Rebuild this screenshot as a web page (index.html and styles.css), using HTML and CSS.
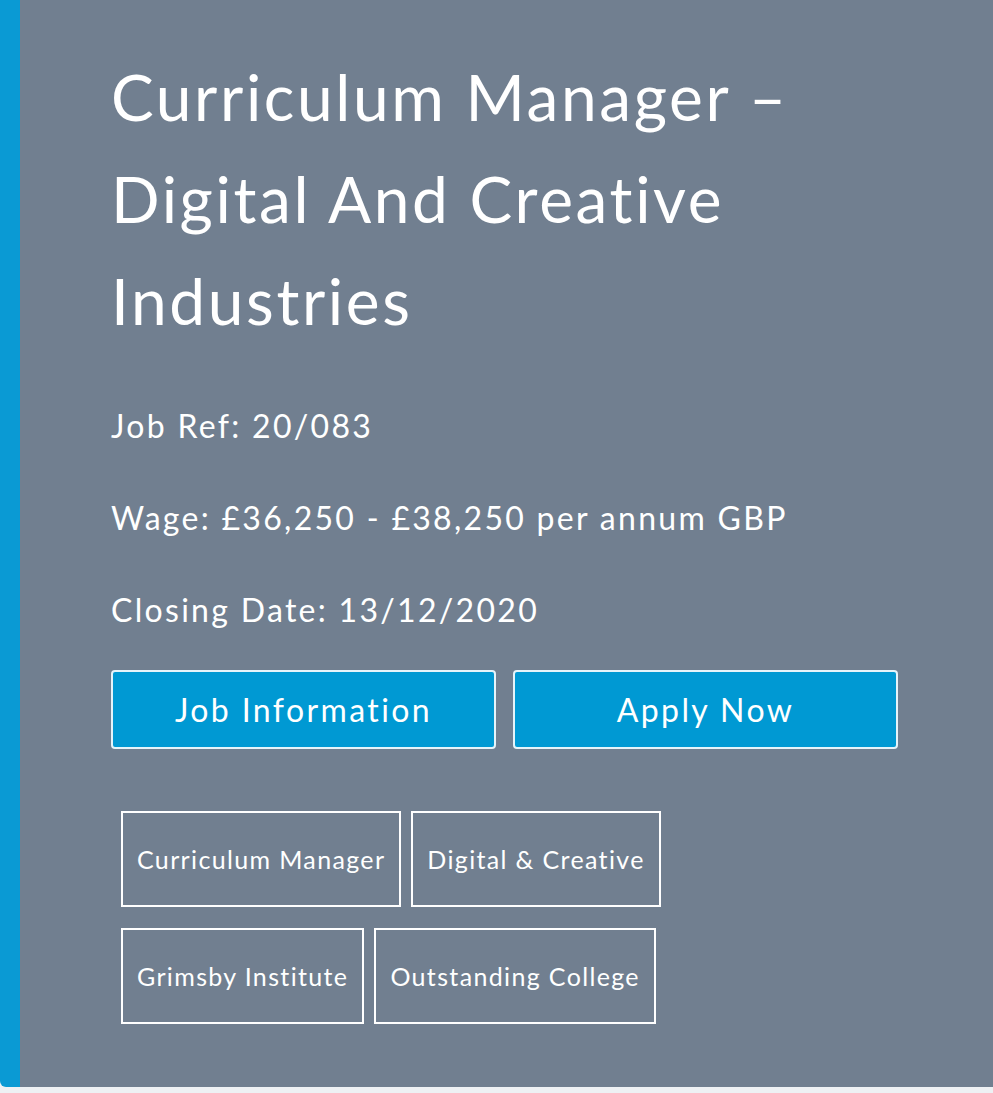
FILE: index.html
```html
<!DOCTYPE html>
<html>
<head>
    <meta charset="UTF-8">
    <title>Curriculum Manager – Digital And Creative Industries</title>
    <link rel="stylesheet" href="styles.css">
</head>
<body>
    <div class="job-card">
        <h2 class="job-title">Curriculum Manager – Digital And Creative Industries</h2>
        <p class="job-meta">Job Ref: 20/083</p>
        <p class="job-meta">Wage: £36,250 - £38,250 per annum GBP</p>
        <p class="job-meta">Closing Date: 13/12/2020</p>
        <div class="job-actions">
            <a class="job-button" href="#">Job Information</a>
            <a class="job-button" href="#">Apply Now</a>
        </div>
        <ul class="job-tags">
            <li><span class="tag">Curriculum Manager</span></li>
            <li><span class="tag">Digital &amp; Creative</span></li>
            <li><span class="tag">Grimsby Institute</span></li>
            <li><span class="tag">Outstanding College</span></li>
        </ul>
    </div>
</body>
</html>
```

FILE: styles.css
```css
body {
    font-family: Lato, 'Noto Sans', sans-serif;
    margin: 0;
    background-color: #eef1f4;
    color: white;
}

.job-card {
    background-color: #717f90;
    border-left: 20px solid #0a9ad4;
    border-bottom-left-radius: 6px;
    padding: 46px 40px 50px 91px;
    height: 1087px;
    box-sizing: border-box;
}

.job-title {
    font-size: 64px;
    font-weight: 400;
    line-height: 102px;
    letter-spacing: 2.6px;
    margin: 0 0 54px 0;
    max-width: 760px;
}

.job-meta {
    font-size: 32px;
    line-height: 40px;
    letter-spacing: 2.3px;
    margin: 0 0 52px 0;
}

.job-meta:last-of-type {
    margin-bottom: 40px;
}

.job-actions {
    display: flex;
    gap: 17px;
    margin-bottom: 62px;
}

.job-button {
    width: 385px;
    height: 79px;
    box-sizing: border-box;
    display: flex;
    align-items: center;
    justify-content: center;
    background-color: #0099d3;
    border: 2px solid #e6f4fa;
    border-radius: 4px;
    color: white;
    font-size: 32px;
    letter-spacing: 2.4px;
    text-decoration: none;
}

.job-tags {
    list-style: none;
    padding: 0 0 0 10px;
    margin: 0;
    display: flex;
    flex-wrap: wrap;
    gap: 21px 10px;
    max-width: 560px;
}

.tag {
    display: flex;
    align-items: center;
    height: 96px;
    box-sizing: border-box;
    padding: 0 14px;
    border: 2px solid white;
    font-size: 25px;
    letter-spacing: 1.35px;
}
```
